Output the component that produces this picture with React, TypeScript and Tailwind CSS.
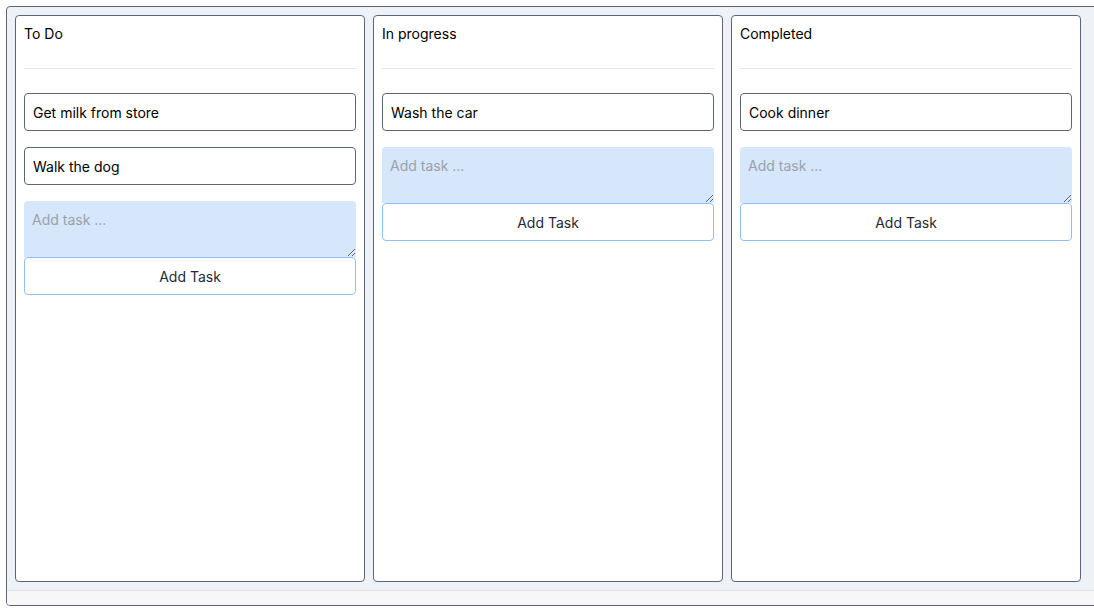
import React from "react";

const columns = [
  { title: "To Do", tasks: ["Get milk from store", "Walk the dog"] },
  { title: "In progress", tasks: ["Wash the car"] },
  { title: "Completed", tasks: ["Cook dinner"] },
];

function Column({ title, tasks }: { title: string; tasks: string[] }) {
  return (
    <div className="w-[350px] shrink-0 h-[567px] border border-[#5b667a] rounded-[4px] bg-white px-2 pt-2 flex flex-col">
      <div className="pb-6 border-b border-[#e5e7eb] text-[14px] leading-5 text-black font-['Inter',sans-serif]">
        {title}
      </div>
      <div className="mt-6 flex flex-col">
        {tasks.map((t) => (
          <div
            key={t}
            className="h-[38px] mb-4 border border-[#5b667a] rounded-[4px] px-2 flex items-center text-[14px] text-black font-['Inter',sans-serif]"
          >
            {t}
          </div>
        ))}
        <textarea
          rows={2}
          placeholder="Add task ..."
          className="block w-full h-[56px] bg-[#d6e6fb] rounded-t-[4px] px-2 pt-[9px] pb-[5px] text-[14px] leading-5 placeholder:text-[#9aa1ab] font-['Inter',sans-serif] outline-none resize-y"
        />
        <button className="h-[38px] w-full border border-[#8fbff5] rounded-[4px] bg-white text-[14px] text-[#1f2937] font-['Inter',sans-serif]">
          Add Task
        </button>
      </div>
    </div>
  );
}

export default function App() {
  return (
    <div className="w-[1094px] h-[610px] bg-white pt-[6px] pl-[6px] overflow-hidden">
      <div className="w-[1100px] h-[600px] border border-[#5b667a] rounded-[4px] bg-[#eef2f7] flex flex-col overflow-hidden">
        <div className="flex gap-2 p-2 h-[583px]">
          {columns.map((c) => (
            <Column key={c.title} title={c.title} tasks={c.tasks} />
          ))}
        </div>
        <div className="flex-1 bg-[#f7f7f7] border-t border-[#e3e3e3]" />
      </div>
    </div>
  );
}
